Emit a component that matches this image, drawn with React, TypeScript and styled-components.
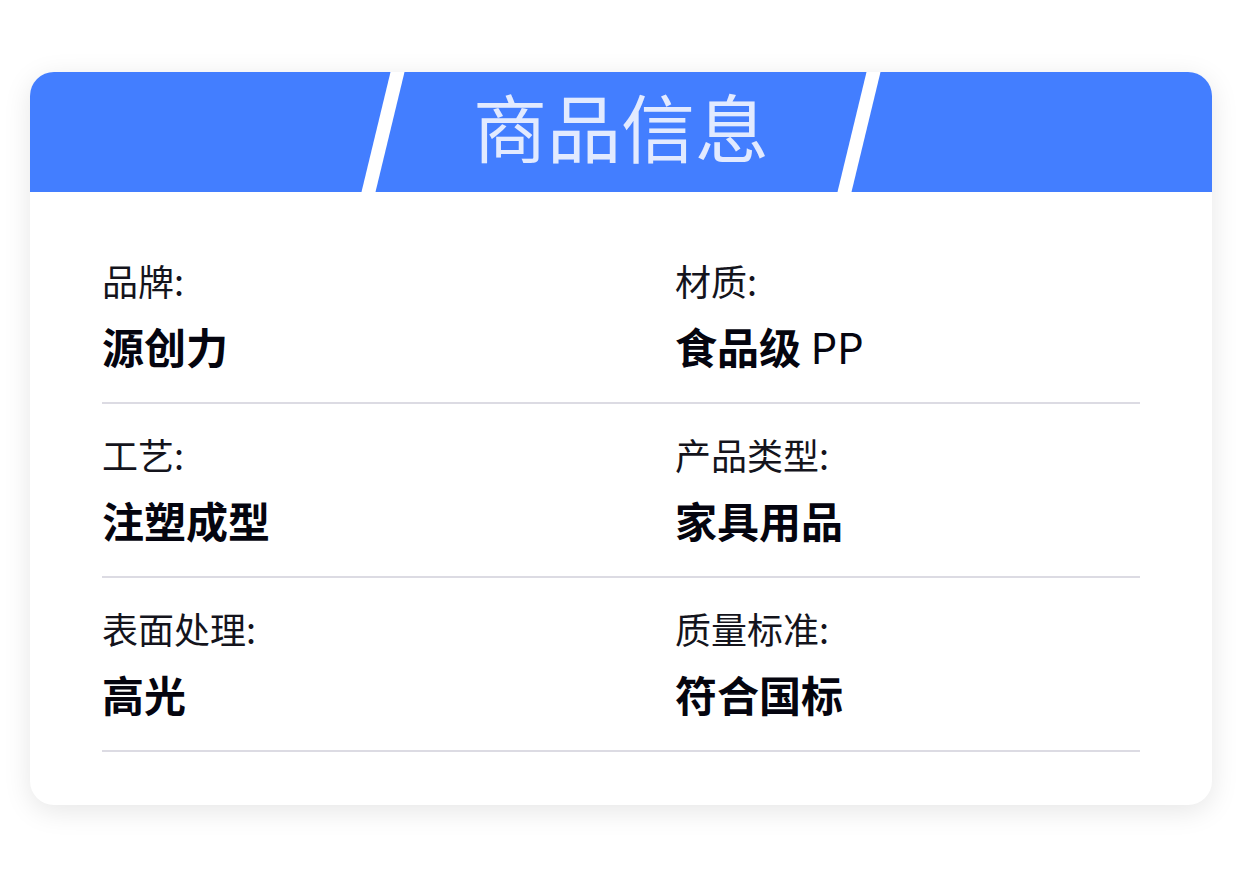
import React from 'react'
import styled, {createGlobalStyle} from 'styled-components'

const GlobalStyle = createGlobalStyle`
  body {
    margin: 0;
    background: #ffffff;
    font-family: "Noto Sans CJK SC", "Noto Sans", sans-serif;
  }
`

interface IInfo {
  label: string
  value: string
  latin?: string
}

const rows: IInfo[][] = [
  [
    {label: '品牌:', value: '源创力'},
    {label: '材质:', value: '食品级', latin: 'PP'}
  ],
  [
    {label: '工艺:', value: '注塑成型'},
    {label: '产品类型:', value: '家具用品'}
  ],
  [
    {label: '表面处理:', value: '高光'},
    {label: '质量标准:', value: '符合国标'}
  ]
]

const App: React.FC = () => {
  return (
    <Page>
      <GlobalStyle />
      <Card>
        <Header>
          <Stripe />
          <Title>商品信息</Title>
          <Stripe />
        </Header>
        <List>
          {rows.map((row, i) => (
            <Row key={i}>
              {row.map(item => (
                <Cell key={item.label}>
                  <Label>{item.label}</Label>
                  <Value>
                    {item.value}
                    {item.latin && <Latin> {item.latin}</Latin>}
                  </Value>
                </Cell>
              ))}
            </Row>
          ))}
        </List>
      </Card>
    </Page>
  )
}

const Page = styled.div`
  padding: 72px 30px;
`

const Card = styled.div`
  background: #ffffff;
  border-radius: 24px;
  overflow: hidden;
  box-shadow: 0 6px 28px rgba(0, 0, 0, 0.1);
`

const Header = styled.div`
  height: 120px;
  background: #437eff;
  display: flex;
  justify-content: center;
  align-items: stretch;
`

const Stripe = styled.span`
  flex: 0 0 14px;
  background: #ffffff;
  transform: skewX(-13.6deg);
`

const Title = styled.h1`
  flex: 0 0 462px;
  margin: 0;
  padding-bottom: 14px;
  display: flex;
  align-items: center;
  justify-content: center;
  font-size: 74px;
  font-weight: 400;
  line-height: 1;
  color: #e2eaff;
`

const List = styled.div`
  padding: 68px 72px 53px 72px;
`

const Row = styled.div`
  display: grid;
  grid-template-columns: 573px 1fr;
  padding: 30px 0 31px 0;
  border-bottom: 2px solid #dcdbe3;
  &:first-child {
    padding-top: 0;
  }
`

const Cell = styled.div`
  display: flex;
  flex-direction: column;
`

const Label = styled.div`
  font-size: 36px;
  line-height: 40px;
  color: #14141c;
  font-weight: 400;
`

const Value = styled.div`
  font-size: 42px;
  line-height: 50px;
  margin-top: 21px;
  color: #05050f;
  font-weight: 700;
`

const Latin = styled.span`
  font-weight: 400;
`

export default App
